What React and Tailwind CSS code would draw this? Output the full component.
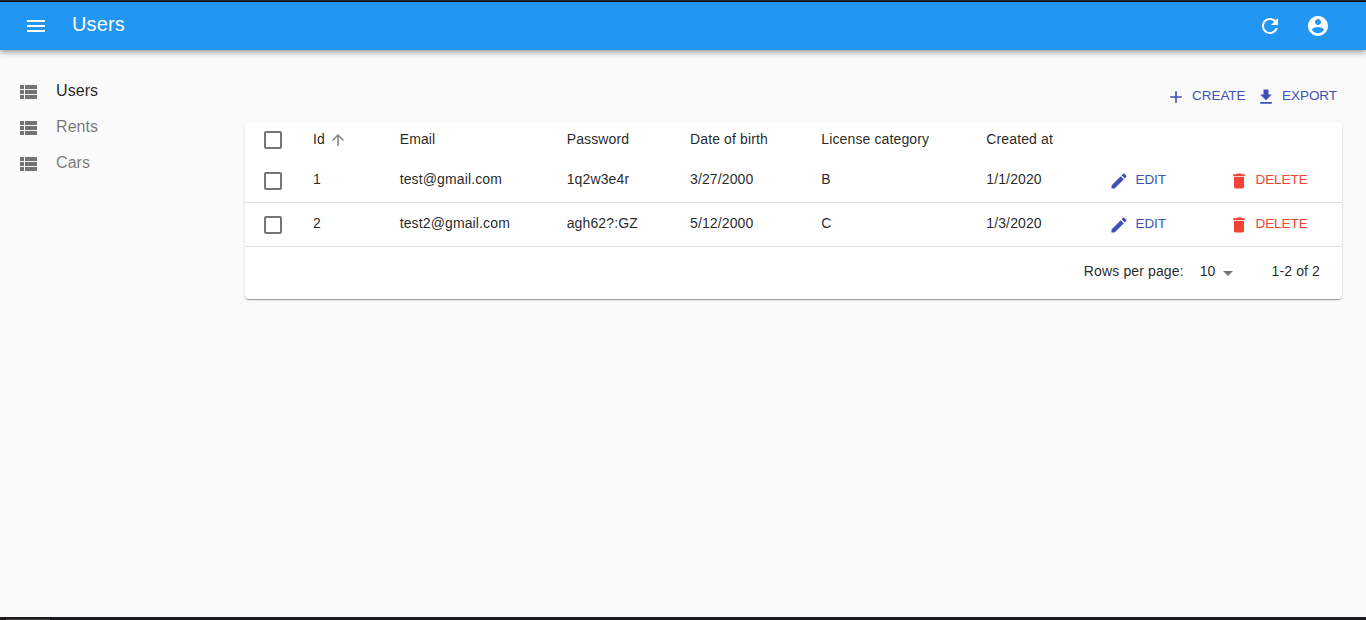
import React from "react";

const paths = {
  menu: "M3 18h18v-2H3v2zm0-5h18v-2H3v2zm0-7v2h18V6H3z",
  refresh:
    "M17.65 6.35C16.2 4.9 14.21 4 12 4c-4.42 0-7.99 3.58-7.99 8s3.57 8 7.99 8c3.73 0 6.84-2.55 7.73-6h-2.08c-.82 2.33-3.04 4-5.65 4-3.31 0-6-2.69-6-6s2.69-6 6-6c1.66 0 3.14.69 4.22 1.78L13 11h7V4l-2.35 2.35z",
  account:
    "M12 2C6.48 2 2 6.48 2 12s4.48 10 10 10 10-4.48 10-10S17.52 2 12 2zm0 3c1.66 0 3 1.34 3 3s-1.34 3-3 3-3-1.34-3-3 1.34-3 3-3zm0 14.2c-2.5 0-4.71-1.28-6-3.22.03-1.99 4-3.08 6-3.08 1.99 0 5.97 1.09 6 3.08-1.29 1.94-3.5 3.22-6 3.22z",
  list: "M4 14h4v-4H4v4zm0 5h4v-4H4v4zM4 9h4V5H4v4zm5 5h12v-4H9v4zm0 5h12v-4H9v4zM9 5v4h12V5H9z",
  add: "M19 13h-6v6h-2v-6H5v-2h6V5h2v6h6v2z",
  download: "M19 9h-4V3H9v6H5l7 7 7-7zM5 18v2h14v-2H5z",
  checkbox:
    "M19 5v14H5V5h14m0-2H5c-1.1 0-2 .9-2 2v14c0 1.1.9 2 2 2h14c1.1 0 2-.9 2-2V5c0-1.1-.9-2-2-2z",
  arrowUp: "M4 12l1.41 1.41L11 7.83V20h2V7.83l5.58 5.59L20 12l-8-8-8 8z",
  edit: "M3 17.25V21h3.75L17.81 9.94l-3.75-3.75L3 17.25zM20.71 7.04c.39-.39.39-1.02 0-1.41l-2.34-2.34c-.39-.39-1.02-.39-1.41 0l-1.83 1.83 3.75 3.75 1.83-1.83z",
  delete: "M6 19c0 1.1.9 2 2 2h8c1.1 0 2-.9 2-2V7H6v12zM19 4h-3.5l-1-1h-5l-1 1H5v2h14V4z",
  dropDown: "M7 10l5 5 5-5z",
};

function Icon({ name, className = "size-6" }) {
  return (
    <svg viewBox="0 0 24 24" fill="currentColor" aria-hidden="true" className={`shrink-0 ${className}`}>
      <path d={paths[name]} />
    </svg>
  );
}

const menu = ["Users", "Rents", "Cars"];

const users = [
  { id: 1, email: "test@gmail.com", password: "1q2w3e4r", birth: "3/27/2000", license: "B", created: "1/1/2020" },
  { id: 2, email: "test2@gmail.com", password: "agh62?:GZ", birth: "5/12/2000", license: "C", created: "1/3/2020" },
];

const columns = "grid grid-cols-[52px_86.7px_167px_123.3px_131.3px_165px_122.7px_120px_1fr] items-center pl-4";

function Action({ icon, label, className }) {
  return (
    <button className={`flex items-center whitespace-nowrap text-[13.5px] leading-5 tracking-[-0.05px] ${className}`}>
      <Icon name={icon} className="size-5" />
      <span className="-mt-0.5 pl-[6.5px]">{label}</span>
    </button>
  );
}

export default function App() {
  return (
    <div className="flex h-[620px] w-[1366px] flex-col overflow-hidden bg-[#fafafa] font-['Liberation_Sans',Arial,sans-serif] text-sm tracking-[0.009em] text-black/87">
      <div className="h-0.5 shrink-0 border-b border-[#0a0e12] bg-[#2b2b2b]" />
      <header className="flex h-12 shrink-0 items-center bg-[#2196f3] pl-6 pr-9 text-white shadow-[0px_2px_4px_-1px_rgba(0,0,0,0.2),0px_4px_5px_0px_rgba(0,0,0,0.14),0px_1px_10px_0px_rgba(0,0,0,0.12)]">
        <Icon name="menu" />
        <h1 className="-mt-1 flex-1 pl-6 text-xl tracking-[0.0075em]">Users</h1>
        <div className="flex gap-6">
          <Icon name="refresh" />
          <Icon name="account" />
        </div>
      </header>

      <div className="flex min-h-0 flex-1">
        <nav className="w-[245px] shrink-0 pt-6 text-base tracking-[0.005em]">
          {menu.map((item, i) => (
            <a key={item} className={`flex h-9 items-center pl-4 ${i === 0 ? "text-black/87" : "text-black/54"}`}>
              <Icon name="list" className="size-6 text-black/54" />
              <span className="-mt-0.5 pl-4">{item}</span>
            </a>
          ))}
        </nav>

        <main className="w-[1097px] pt-[37px] text-black/87">
          <div className="flex h-[35px] items-start justify-end gap-2.5 pr-[5px] text-[#3f51b5]">
            <Action icon="add" label="CREATE" className="" />
            <Action icon="download" label="EXPORT" className="" />
          </div>

          <section className="h-[177px] rounded bg-white shadow-[0px_2px_1px_-1px_rgba(0,0,0,0.2),0px_1px_1px_0px_rgba(0,0,0,0.14),0px_1px_3px_0px_rgba(0,0,0,0.12)]">
            <div className={`${columns} h-[37px] pb-px`}>
              <Icon name="checkbox" className="size-6 text-black/54" />
              <span className="flex items-center gap-1">
                <span className="-mt-0.5">Id</span>
                <Icon name="arrowUp" className="size-[18px] text-black/50" />
              </span>
              <span className="-mt-0.5">Email</span>
              <span className="-mt-0.5">Password</span>
              <span className="-mt-0.5">Date of birth</span>
              <span className="-mt-0.5">License category</span>
              <span className="-mt-0.5">Created at</span>
            </div>
            {users.map((u) => (
              <div key={u.id} className={`${columns} h-11 border-b border-[#e0e0e0]`}>
                <Icon name="checkbox" className="size-6 text-black/54" />
                <span className="-mt-[3px]">{u.id}</span>
                <span className="-mt-[3px]">{u.email}</span>
                <span className="-mt-[3px]">{u.password}</span>
                <span className="-mt-[3px]">{u.birth}</span>
                <span className="-mt-[3px]">{u.license}</span>
                <span className="-mt-[3px]">{u.created}</span>
                <Action icon="edit" label="EDIT" className="text-[#3f51b5]" />
                <Action icon="delete" label="DELETE" className="text-[#f44336]" />
              </div>
            ))}
            <div className="flex h-[52px] items-center justify-end pr-[22px]">
              <span className="-mt-1">Rows per page:</span>
              <span className="-mt-1 pl-4">10</span>
              <Icon name="dropDown" className="size-6 text-black/54" />
              <span className="-mt-1 pl-8">1-2 of 2</span>
            </div>
          </section>
        </main>
      </div>

      <footer className="h-[3px] shrink-0 bg-[#1b1b1d] pl-1.5 pt-0.5">
        <div className="h-px w-11 bg-[#4a4648]" />
      </footer>
    </div>
  );
}
